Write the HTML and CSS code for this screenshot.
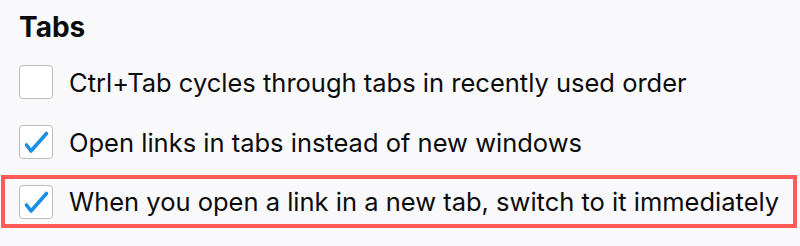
FILE: index.html
```html
<!DOCTYPE html>
<html lang="en">
<head>
  <meta charset="UTF-8">
  <title>Tabs</title>
  <link rel="stylesheet" href="styles.css">
</head>
<body>
  <section class="group">
    <h2 class="group-title">Tabs</h2>

    <label class="option">
      <span class="check"></span>
      <span class="option-text">Ctrl+Tab cycles through tabs in recently used order</span>
    </label>

    <label class="option">
      <span class="check checked">
        <svg viewBox="0 0 34 34" width="34" height="34"><path d="M7.5 20 L12 26 L27.5 8.5" /></svg>
      </span>
      <span class="option-text">Open links in tabs instead of new windows</span>
    </label>

    <!-- highlighted option -->
    <label class="option highlight">
      <span class="check checked">
        <svg viewBox="0 0 34 34" width="34" height="34"><path d="M7.5 20 L12 26 L27.5 8.5" /></svg>
      </span>
      <span class="option-text">When you open a link in a new tab, switch to it immediately</span>
    </label>
  </section>
</body>
</html>
```

FILE: styles.css
```css
body {
  margin: 0;
  background-color: #f9f9fb;
  color: #0c0c0d;
  font-family: Inter, "Liberation Sans", Arial, sans-serif;
}
.group {
  padding: 7px 0 0 19px;
}
.group-title {
  margin: 0 0 5px;
  font-size: 28px;
  font-weight: 700;
  line-height: 40px;
}
.option {
  display: flex;
  align-items: center;
  height: 60px;
  gap: 16px;
  font-size: 25.5px;
}
.option.highlight {
  box-sizing: border-box;
  height: 53px;
  margin: 3px 3px 4px -18px;
  padding-left: 14px;
  border: 4px solid #ff5b57;
}
.check {
  box-sizing: border-box;
  width: 34px;
  height: 34px;
  flex: none;
  background: #fff;
  border: 1px solid #bdbdc0;
  border-radius: 4px;
  position: relative;
}
.check svg {
  position: absolute;
  left: -1px;
  top: -1px;
}
.check svg path {
  fill: none;
  stroke: #1a8fe3;
  stroke-width: 3.6;
  stroke-linecap: round;
  stroke-linejoin: round;
}
.option-text {
  white-space: nowrap;
}
```
